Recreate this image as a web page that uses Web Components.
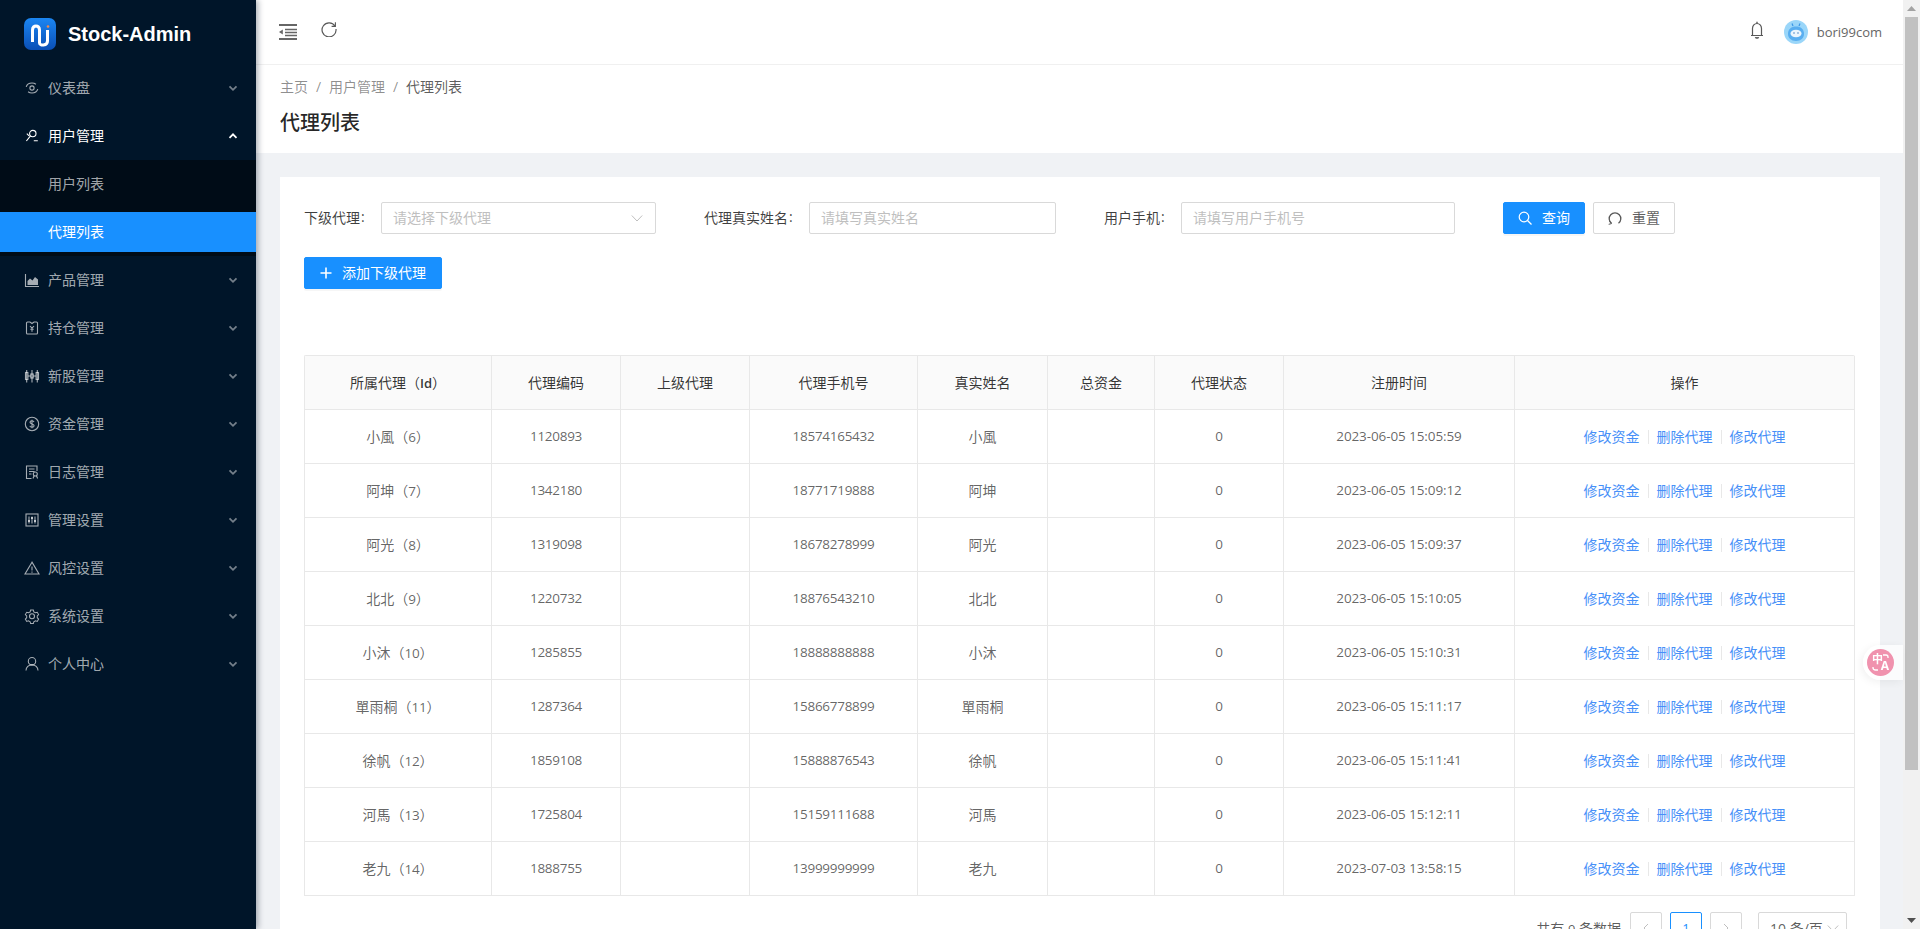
<!DOCTYPE html>
<html lang="zh-CN">
<head>
<meta charset="utf-8">
<title>Stock-Admin</title>
<style>
    html, body{
        margin: 0;
        height: 100%;
        overflow: hidden;
        font-family: "Open Sans", "Noto Sans CJK SC", sans-serif;
        font-size: 14px;
    }
</style>
</head>
<body>
<admin-layout>
    <side-menu slot="side">
        <menu-item label="仪表盘" icon="dash"></menu-item>
        <menu-item label="用户管理" icon="users" open>
            <sub-item>用户列表</sub-item>
            <sub-item active>代理列表</sub-item>
        </menu-item>
        <menu-item label="产品管理" icon="chart"></menu-item>
        <menu-item label="持仓管理" icon="hold"></menu-item>
        <menu-item label="新股管理" icon="candle"></menu-item>
        <menu-item label="资金管理" icon="money"></menu-item>
        <menu-item label="日志管理" icon="log"></menu-item>
        <menu-item label="管理设置" icon="sliders"></menu-item>
        <menu-item label="风控设置" icon="warn"></menu-item>
        <menu-item label="系统设置" icon="gear"></menu-item>
        <menu-item label="个人中心" icon="user"></menu-item>
    </side-menu>
    <top-bar></top-bar>
    <page-head></page-head>
    <content-card>
        <filter-form></filter-form>
        <agent-table></agent-table>
        <table-pager></table-pager>
    </content-card>
    <page-scrollbar slot="scroll"></page-scrollbar>
</admin-layout>
<translate-fab></translate-fab>

<script>
const ICONS = {
    dash: `<circle cx="8" cy="8" r="2.1"/><path d="M2.200 6.800C3 4.400 5.200 3 8 3c1.500 0 2.900.5 3.900 1.300M13.800 9.200C13 11.600 10.800 13 8 13c-1.500 0-2.900-.5-3.900-1.300"/>`,
    users: `<circle cx="8.800" cy="5.600" r="3.200"/><path d="M6.500 7.900L2.400 13M2.800 5.600l2.300 2.200M9.800 12.800h4"/>`,
    chart: `<path d="M1.500 2v12.500H15"/><path fill="currentColor" stroke="none" d="M3.500 13V9l2.500-2.500 2.500 2 2.500-3.500 3 2.500V13z"/>`,
    hold: `<path d="M2.500 3c0-.5.500-1 1-1h2.500l2 1.500 2-1.500h2.500c.5 0 1 .5 1 1v10c0 .5-.5 1-1 1h-9c-.5 0-1-.5-1-1z"/><path d="M6 6l2 2.200L10 6M8 8.200v3.600M6.300 9.300h3.400"/>`,
    candle: `<rect x="1.500" y="4.500" width="2.400" height="7"/><rect x="6.800" y="6" width="2.400" height="4"/><rect x="12.100" y="4.500" width="2.400" height="7"/><path d="M2.700 2v12.500M8 2v12.500M13.300 2v12.500M3.900 8h2.900M9.200 8h2.900"/>`,
    money: `<circle cx="8" cy="8" r="6.700"/><path d="M10 6c-.3-.8-1-1.200-2-1.200-1.200 0-2 .6-2 1.500 0 2.100 4.100 1.300 4.100 3.400 0 .9-.9 1.500-2.100 1.500-1.100 0-1.900-.5-2.200-1.300M8 3.800v8.400"/>`,
    log: `<path d="M13 7V2H2.500v12.500h5"/><path d="M5 5h5.500M5 7.500h5.500M5 10h2.500"/><circle cx="11.300" cy="10" r="2"/><path d="M10 12l-1 2.500M12.600 12l1 2.500"/>`,
    sliders: `<rect x="2" y="2" width="12" height="12"/><path d="M5 4.500v7M8 4.500v7M11 4.500v7"/><path stroke-width="2" d="M4 9h2M7 6h2M10 9h2"/>`,
    warn: `<path d="M8 2.200L1 14h14zM8 6.500v4M8 11.500v1.200"/>`,
    gear: `<path d="M6.500 1.500h3l.5 2 1.800 1 2-.6 1.500 2.600-1.500 1.500v1.900l1.500 1.500-1.500 2.600-2-.6-1.800 1-.5 2h-3l-.5-2-1.800-1-2 .6L.7 11.400l1.500-1.500V8L.7 6.500l1.500-2.600 2 .6 1.800-1z" transform="translate(.7 .7) scale(.91)"/><circle cx="8" cy="8.300" r="2.500"/>`,
    user: `<circle cx="8" cy="5.200" r="3.700"/><path d="M2 14.500c0-3.300 2.700-5.600 6-5.600s6 2.300 6 5.600"/>`
};

function svgIcon(name, size){
    return `<svg width="${size}" height="${size}" viewBox="0 0 16 16" fill="none" stroke="currentColor" stroke-width="1.100">${ICONS[name]}</svg>`;
}

class BaseElement extends HTMLElement {
    constructor(){
        super();
        this.attachShadow({mode: "open"});
    }

    getTemplate(){
        const template = document.createElement('template');
        template.innerHTML = `
            ${this.getMarkup()}
            <style>${this.getStyle()}</style>
        `;
        return template;
    }

    render(){
        this.shadowRoot.appendChild(this.getTemplate().content.cloneNode(true));
    }

    connectedCallback(){
        this.render();
    }
}

class AdminLayout extends BaseElement {
    getMarkup(){
        return `
            <slot name="side"></slot>
            <main><slot></slot></main>
            <slot name="scroll"></slot>
        `;
    }
    getStyle(){
        return `
            :host{
                display: flex;
                height: 929px;
                overflow: hidden;
                background: #f0f2f5;
            }
            main{
                flex: 1;
                min-width: 0;
                display: flex;
                flex-direction: column;
                overflow: hidden;
            }
        `;
    }
}

class SideMenu extends BaseElement {
    getMarkup(){
        return `
            <div class="logo">
                <svg width="32" height="32" viewBox="0 0 32 32">
                    <defs>
                        <linearGradient id="lg" x1="0" y1="0" x2="0" y2="1">
                            <stop offset="0" stop-color="#1b86f2"/>
                            <stop offset="1" stop-color="#0a4fb6"/>
                        </linearGradient>
                    </defs>
                    <rect width="32" height="32" rx="7" fill="url(#lg)"/>
                    <path d="M8.500 24V12c0-5.500 7-5.500 7 0v13" fill="none" stroke="#fff" stroke-width="3"/>
                    <path d="M15.500 25c0 3 8 3 8-2V12" fill="none" stroke="#fff" stroke-width="3"/>
                    <circle cx="24" cy="8.500" r="1.300" fill="#f08a4b"/>
                </svg>
                <h1>Stock-Admin</h1>
            </div>
            <slot></slot>
        `;
    }
    getStyle(){
        return `
            :host{
                display: block;
                position: relative;
                z-index: 2;
                width: 256px;
                flex: none;
                height: 929px;
                background: #001529;
                box-shadow: 2px 0 6px rgba(0, 21, 41, .35);
            }
            .logo{
                display: flex;
                align-items: center;
                gap: 12px;
                height: 64px;
                padding: 10px 0 6px 24px;
                box-sizing: border-box;
            }
            h1{
                margin: 0;
                color: #fff;
                font: bold 20px "Liberation Sans", sans-serif;
            }
        `;
    }
}

class MenuItem extends BaseElement {
    getMarkup(){
        const open = this.hasAttribute('open');
        return `
            <div class="row ${open ? 'open' : ''}">
                <span class="icon">${svgIcon(this.getAttribute('icon'), 16)}</span>
                <span class="label">${this.getAttribute('label')}</span>
                <svg class="arrow" width="10" height="10" viewBox="0 0 10 10" fill="none" stroke="currentColor" stroke-width="1.800">
                    <path d="${open ? 'M1.500 6.800L5 3.300l3.500 3.500' : 'M1.500 3.300L5 6.800l3.500-3.500'}"/>
                </svg>
            </div>
            ${open ? '<div class="sub"><slot></slot></div>' : ''}
        `;
    }
    getStyle(){
        return `
            :host{
                display: block;
            }
            .row{
                display: flex;
                align-items: center;
                height: 48px;
                padding: 0 18px 0 24px;
                color: rgba(255, 255, 255, .65);
            }
            .row.open{
                color: #fff;
            }
            .icon{
                display: flex;
                width: 16px;
                margin-right: 8px;
            }
            .label{
                flex: 1;
                margin-top: -2px;
            }
            .arrow{
                opacity: .7;
            }
            .open .arrow{
                opacity: 1;
            }
            .sub{
                display: flex;
                flex-direction: column;
                gap: 8px;
                padding: 4px 0;
                background: #000c17;
            }
        `;
    }
}

class SubItem extends BaseElement {
    getMarkup(){
        return `<slot></slot>`;
    }
    getStyle(){
        return `
            :host{
                display: flex;
                align-items: center;
                box-sizing: border-box;
                height: 40px;
                padding: 0 0 2px 48px;
                color: rgba(255, 255, 255, .65);
            }
            :host([active]){
                background: #1890ff;
                color: #fff;
            }
        `;
    }
}

class TopBar extends BaseElement {
    getMarkup(){
        return `
            <svg class="fold" width="18" height="16" viewBox="0 0 18 16">
                <path d="M0 1h18M0 15h18" stroke="#666" stroke-width="2"/>
                <path d="M6 5.500h12M6 8.500h12M6 11.500h12" stroke="#666" stroke-width="1.300"/>
                <path d="M0 8l3.800-2.600v5.200z" fill="#666"/>
            </svg>
            <svg class="reload" width="16" height="16" viewBox="0 0 16 16" fill="none" stroke="#595959" stroke-width="1.200">
                <path d="M14 5.200A7 7 0 1 0 15 8"/>
                <path d="M14.400 1.200v4.200h-3.800" stroke-width="1.100"/>
            </svg>
            <span class="grow"></span>
            <svg class="bell" width="14" height="18" viewBox="0 0 14 18" fill="none" stroke="#595959" stroke-width="1.200">
                <path d="M1 14.500h12M2.500 14.500V7.500a4.500 5 0 0 1 9 0v7"/>
                <path d="M7 .8v1.700" stroke-width="1.400"/>
                <path d="M5.300 16.200a1.800 1.500 0 0 0 3.400 0" fill="#595959"/>
            </svg>
            <svg class="avatar" width="24" height="24" viewBox="0 0 24 24">
                <circle cx="12" cy="12" r="12" fill="#9ad6f9"/>
                <path d="M4 14c0-5 3.200-7.500 8-7.500s8 2.500 8 7.500c0 4-3.200 7-8 7s-8-3-8-7z" fill="#58aef0"/>
                <path d="M9 6l-1-2.500M15 6l1-2.500" stroke="#3c96e6" stroke-width="1.200"/>
                <ellipse cx="12" cy="13.500" rx="5.500" ry="3.800" fill="#eaf5fd"/>
                <circle cx="10" cy="13" r=".7" fill="#2b6fb8"/>
                <circle cx="14" cy="13" r=".7" fill="#2b6fb8"/>
            </svg>
            <span class="name">bori99com</span>
        `;
    }
    getStyle(){
        return `
            :host{
                display: flex;
                align-items: center;
                flex: none;
                position: relative;
                z-index: 1;
                height: 64px;
                padding-left: 23px;
                padding-right: 21px;
                background: #fff;
                border-bottom: 1px solid #f0f0f0;
            }
            .fold{
                margin-right: 24px;
            }
            .reload{
                margin-top: -6px;
            }
            .grow{
                flex: 1;
            }
            .bell{
                margin-right: 20px;
                margin-top: -4px;
            }
            .avatar{
                margin-right: 9px;
            }
            .name{
                color: #666;
                font-size: 13px;
            }
        `;
    }
}

class PageHead extends BaseElement {
    getMarkup(){
        return `
            <nav>
                <span>主页</span><i>/</i><span>用户管理</span><i>/</i><span class="now">代理列表</span>
            </nav>
            <h2>代理列表</h2>
        `;
    }
    getStyle(){
        return `
            :host{
                display: block;
                flex: none;
                box-sizing: border-box;
                height: 88px;
                padding: 11px 24px 0;
                background: #fff;
            }
            nav{
                display: flex;
                align-items: center;
                height: 20px;
                color: rgba(0, 0, 0, .45);
            }
            i{
                font-style: normal;
                margin: 0 8px;
                width: 5px;
            }
            .now{
                color: rgba(0, 0, 0, .65);
            }
            h2{
                margin: 11px 0 0;
                height: 32px;
                line-height: 32px;
                font-size: 20px;
                font-weight: 500;
                color: rgba(0, 0, 0, .85);
            }
        `;
    }
}

class ContentCard extends BaseElement {
    getMarkup(){
        return `<div class="card"><slot></slot></div>`;
    }
    getStyle(){
        return `
            :host{
                display: block;
                padding: 24px 23px 0 24px;
            }
            .card{
                background: #fff;
                padding: 24px 25px 24px 24px;
            }
        `;
    }
}

class FilterForm extends BaseElement {
    getMarkup(){
        return `
            <div class="row">
                <label><span>下级代理</span><em>:</em></label>
                <div class="field">
                    <span>请选择下级代理</span>
                    <svg width="12" height="12" viewBox="0 0 12 12" fill="none" stroke="#bfbfbf" stroke-width="1"><path d="M.8 3.500L6 9l5.200-5.500"/></svg>
                </div>
                <label><span>代理真实姓名</span><em>:</em></label>
                <div class="field"><span>请填写真实姓名</span></div>
                <label><span>用户手机</span><em>:</em></label>
                <div class="field"><span>请填写用户手机号</span></div>
                <div class="actions">
                    <button class="primary">
                        <svg width="14" height="14" viewBox="0 0 14 14" fill="none" stroke="currentColor" stroke-width="1.200"><circle cx="6" cy="6" r="4.800"/><path d="M9.500 9.500L13.500 13.500"/></svg>
                        <span>查询</span>
                    </button>
                    <button>
                        <svg width="14" height="14" viewBox="0 0 14 14" fill="none" stroke="#595959" stroke-width="1.300"><path d="M3.500 12.300A5.800 5.800 0 1 1 10.500 12.300"/><path d="M1.700 10.200l1.800 2.400-2.800.7" stroke-width="1"/></svg>
                        <span>重置</span>
                    </button>
                </div>
            </div>
            <button class="primary add">
                <svg width="12" height="12" viewBox="0 0 12 12" fill="none" stroke="currentColor" stroke-width="1.600"><path d="M6 .5v11M.5 6h11"/></svg>
                <span>添加下级代理</span>
            </button>
        `;
    }
    getStyle(){
        return `
            :host{
                display: block;
                color: rgba(0, 0, 0, .65);
            }
            .row{
                display: grid;
                grid-template-columns: 77px 275px 48px 105px 247px 48px 77px 274px 1fr;
                height: 32px;
                align-items: center;
            }
            label{
                display: flex;
                align-items: center;
                color: rgba(0, 0, 0, .75);
            }
            label:nth-of-type(2){
                grid-column: 4;
            }
            label:nth-of-type(3){
                grid-column: 7;
            }
            label span, .field span, button span{
                margin-top: -2px;
            }
            em{
                font-style: normal;
                margin-left: 1px;
                margin-top: -2px;
            }
            .field{
                box-sizing: border-box;
                height: 32px;
                display: flex;
                align-items: center;
                justify-content: space-between;
                padding: 0 12px 0 11px;
                border: 1px solid #d9d9d9;
                border-radius: 2px;
                color: #bfbfbf;
            }
            .actions{
                grid-column: 9;
                display: flex;
                gap: 8px;
                margin-left: 48px;
                margin-top: 1px;
            }
            button{
                box-sizing: border-box;
                display: inline-flex;
                align-items: center;
                justify-content: center;
                gap: 10px;
                width: 82px;
                height: 32px;
                padding: 0;
                background: #fff;
                color: rgba(0, 0, 0, .65);
                border: 1px solid #d9d9d9;
                border-radius: 2px;
                font: inherit;
            }
            button.primary{
                background: #1890ff;
                border-color: #1890ff;
                color: #fff;
                box-shadow: 0 2px 0 rgba(0, 0, 0, .035);
            }
            button.add{
                width: 138px;
                margin-top: 24px;
                display: flex;
            }
        `;
    }
}

const AGENTS = [
    ["小風", 6, "1120893", "18574165432", "2023-06-05 15:05:59"],
    ["阿坤", 7, "1342180", "18771719888", "2023-06-05 15:09:12"],
    ["阿光", 8, "1319098", "18678278999", "2023-06-05 15:09:37"],
    ["北北", 9, "1220732", "18876543210", "2023-06-05 15:10:05"],
    ["小沐", 10, "1285855", "18888888888", "2023-06-05 15:10:31"],
    ["單雨桐", 11, "1287364", "15866778899", "2023-06-05 15:11:17"],
    ["徐帆", 12, "1859108", "15888876543", "2023-06-05 15:11:41"],
    ["河馬", 13, "1725804", "15159111688", "2023-06-05 15:12:11"],
    ["老九", 14, "1888755", "13999999999", "2023-07-03 13:58:15"]
];

class AgentTable extends BaseElement {
    getMarkup(){
        const widths = [187, 129, 129, 168, 130, 107, 129, 231, 340];
        const heads = ["所属代理（<b>Id</b>）", "代理编码", "上级代理", "代理手机号", "真实姓名", "总资金", "代理状态", "注册时间", "操作"];
        return `
            <table>
                <colgroup>${widths.map(w => `<col style="width:${w}px">`).join('')}</colgroup>
                <thead><tr>${heads.map(h => `<th>${h}</th>`).join('')}</tr></thead>
                <tbody>
                    ${AGENTS.map(a => `
                        <tr>
                            <td>${a[0]}（<span class="num">${a[1]}</span>）</td>
                            <td class="num">${a[2]}</td>
                            <td></td>
                            <td class="num">${a[3]}</td>
                            <td>${a[0]}</td>
                            <td></td>
                            <td class="num">0</td>
                            <td class="num date">${a[4]}</td>
                            <td class="ops"><a>修改资金</a><i></i><a>删除代理</a><i></i><a>修改代理</a></td>
                        </tr>
                    `).join('')}
                </tbody>
            </table>
        `;
    }
    getStyle(){
        return `
            :host{
                display: block;
                margin-top: 66px;
            }
            table{
                table-layout: fixed;
                width: 1551px;
                border-collapse: separate;
                border-spacing: 0;
                border-top: 1px solid #e8e8e8;
                border-left: 1px solid #e8e8e8;
                border-radius: 2px 2px 0 0;
            }
            th, td{
                box-sizing: border-box;
                height: 54px;
                padding: 0 0 2px;
                text-align: center;
                font-weight: 400;
                border-right: 1px solid #e8e8e8;
                border-bottom: 1px solid #e8e8e8;
                color: rgba(0, 0, 0, .62);
            }
            th{
                background: #fafafa;
                color: rgba(0, 0, 0, .8);
            }
            th b{
                font-weight: 600;
                font-size: 13px;
            }
            .num{
                font-size: 13.5px;
                letter-spacing: -.28px;
            }
            .date{
                letter-spacing: -.1px;
            }
            a{
                color: #4790f8;
            }
            i{
                display: inline-block;
                width: 1px;
                height: 14px;
                margin: 0 8px;
                background: #e8e8e8;
                vertical-align: -2px;
            }
        `;
    }
}

class TablePager extends BaseElement {
    getMarkup(){
        return `
            <span class="total">共有 <span class="n">9</span> 条数据</span>
            <div class="box"><svg width="10" height="10" viewBox="0 0 10 10" fill="none" stroke="#bfbfbf"><path d="M7 1L3 5l4 4"/></svg></div>
            <div class="box on">1</div>
            <div class="box"><svg width="10" height="10" viewBox="0 0 10 10" fill="none" stroke="#bfbfbf"><path d="M3 1l4 4-4 4"/></svg></div>
            <div class="box size">
                <span>10 条/页</span>
                <svg width="12" height="12" viewBox="0 0 12 12" fill="none" stroke="#bfbfbf"><path d="M.8 3.500L6 9l5.200-5.500"/></svg>
            </div>
        `;
    }
    getStyle(){
        return `
            :host{
                display: flex;
                align-items: center;
                justify-content: flex-end;
                gap: 8px;
                margin-top: 16px;
                margin-right: 8px;
                height: 32px;
                color: rgba(0, 0, 0, .65);
            }
            .total{
                margin-right: 1px;
            }
            .box{
                box-sizing: border-box;
                display: flex;
                align-items: center;
                justify-content: center;
                width: 32px;
                height: 32px;
                border: 1px solid #d9d9d9;
                border-radius: 2px;
            }
            .on{
                border-color: #1890ff;
                color: #1890ff;
                font-size: 13px;
            }
            .size{
                width: 89px;
                margin-left: 8px;
                gap: 4px;
                justify-content: flex-start;
                padding-left: 11px;
                white-space: nowrap;
            }
            .n{
                font-size: 13px;
            }
        `;
    }
}

class PageScrollbar extends BaseElement {
    getMarkup(){
        return `
            <div class="end"><svg width="9" height="5" viewBox="0 0 9 5"><path d="M0 5l4.500-5L9 5z" fill="#a3a3a3"/></svg></div>
            <div class="thumb"></div>
            <div class="track"></div>
            <div class="end"><svg width="9" height="5" viewBox="0 0 9 5"><path d="M0 0l4.500 5L9 0z" fill="#505050"/></svg></div>
        `;
    }
    getStyle(){
        return `
            :host{
                display: flex;
                flex-direction: column;
                flex: none;
                width: 17px;
                height: 929px;
                background: #f1f1f1;
            }
            .end{
                display: flex;
                align-items: center;
                justify-content: center;
                height: 17px;
            }
            .thumb{
                height: 753px;
                margin: 0 2px;
                background: #c1c1c1;
            }
            .track{
                flex: 1;
            }
        `;
    }
}

class TranslateFab extends BaseElement {
    getMarkup(){
        return `
            <div class="dot">
                <span class="zh">中</span>
                <span class="en">A</span>
                <svg width="27" height="27" viewBox="0 0 27 27" fill="none" stroke="#fff" stroke-width="1.300">
                    <path d="M16 6h3c1.200 0 2 .8 2 2v1"/>
                    <path d="M6 18v.5c0 1.500 1 2.500 2.500 2.500h2.500"/>
                </svg>
            </div>
        `;
    }
    getStyle(){
        return `
            :host{
                display: flex;
                align-items: center;
                position: fixed;
                top: 645px;
                right: 17px;
                z-index: 5;
                box-sizing: border-box;
                width: 40px;
                height: 35px;
                padding-left: 4px;
                background: rgba(255, 255, 255, .75);
                border-radius: 18px 0 0 18px;
                box-shadow: -2px 2px 8px rgba(0, 0, 0, .06);
            }
            .dot{
                position: relative;
                width: 27px;
                height: 27px;
                border-radius: 50%;
                background: #f092ae;
                color: #fff;
                font-weight: 700;
            }
            .dot span{
                position: absolute;
                line-height: 1;
            }
            .dot svg{
                position: absolute;
                left: 0;
                top: 0;
            }
            .zh{
                left: 5px;
                top: 4px;
                font-size: 11px;
            }
            .en{
                right: 5px;
                bottom: 4px;
                font-size: 12px;
            }
        `;
    }
}

customElements.define("admin-layout", AdminLayout);
customElements.define("side-menu", SideMenu);
customElements.define("menu-item", MenuItem);
customElements.define("sub-item", SubItem);
customElements.define("top-bar", TopBar);
customElements.define("page-head", PageHead);
customElements.define("content-card", ContentCard);
customElements.define("filter-form", FilterForm);
customElements.define("agent-table", AgentTable);
customElements.define("table-pager", TablePager);
customElements.define("page-scrollbar", PageScrollbar);
customElements.define("translate-fab", TranslateFab);
</script>
</body>
</html>
